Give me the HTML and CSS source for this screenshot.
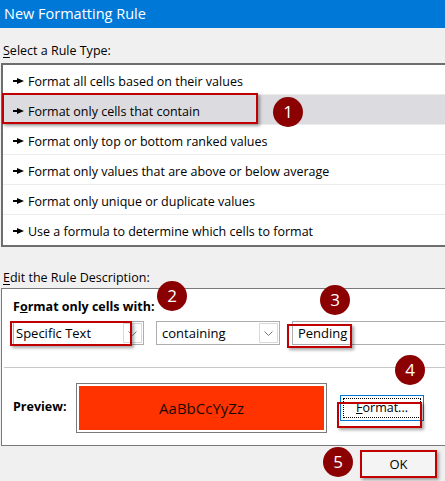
FILE: index.html
```html
<!DOCTYPE html>
<html>
<head>
<meta charset="utf-8">
<link rel="stylesheet" href="styles.css">
</head>
<body>
<div class="dialog">
  <div class="titlebar">New Formatting Rule</div>
  <div class="label sel"><u>S</u>elect a Rule Type:</div>
  <div class="list">
    <div class="row"><span class="arr"></span>Format all cells based on their values</div>
    <div class="row active"><span class="arr"></span>Format only cells that contain</div>
    <div class="row"><span class="arr"></span>Format only top or bottom ranked values</div>
    <div class="row"><span class="arr"></span>Format only values that are above or below average</div>
    <div class="row"><span class="arr"></span>Format only unique or duplicate values</div>
    <div class="row last"><span class="arr"></span>Use a formula to determine which cells to format</div>
  </div>
  <div class="label edit"><u>E</u>dit the Rule Description:</div>
  <div class="desc">
    <div class="top">
      <div class="bold">F<u>o</u>rmat only cells with:</div>
      <div class="controls">
        <div class="combo c1"><span class="val">Specific Text</span><span class="btn"><svg width="9" height="5" viewBox="0 0 9 5"><path d="M0.5 0.5 L4.5 4.5 L8.5 0.5" fill="none" stroke="#7a7a7a" stroke-width="1"/></svg></span></div>
        <div class="combo c2"><span class="val">containing</span><span class="btn"><svg width="9" height="5" viewBox="0 0 9 5"><path d="M0.5 0.5 L4.5 4.5 L8.5 0.5" fill="none" stroke="#7a7a7a" stroke-width="1"/></svg></span></div>
        <div class="textbox"><span class="val">Pending</span></div>
      </div>
    </div>
    <div class="bottom">
      <div class="bold prev">Preview:</div>
      <div class="preview"><div class="fill">AaBbCcYyZz</div></div>
      <div class="fmtbtn"><span><u>F</u>ormat...</span></div>
    </div>
  </div>
  <div class="footer">
    <div class="okbtn">OK</div>
  </div>

  <div class="hl hl1"></div>
  <div class="hl hl2"></div>
  <div class="hl hl3"></div>
  <div class="hl hl4"></div>
  <div class="hl hl5"></div>

  <div class="badge b1">1</div>
  <div class="badge b2">2</div>
  <div class="badge b3">3</div>
  <div class="badge b4">4</div>
  <div class="badge b5">5</div>
</div>
</body>
</html>
```
FILE: styles.css
```css
html, body {
  margin: 0;
  padding: 0;
}
body {
  width: 445px;
  height: 481px;
  overflow: hidden;
  background: #f0f0f0;
  font-family: "Open Sans", "Noto Sans", "DejaVu Sans", sans-serif;
  font-size: 12.5px;
  color: #000;
}
.dialog {
  position: relative;
  width: 445px;
  height: 481px;
  display: flex;
  flex-direction: column;
}
.titlebar {
  height: 28px;
  background: #0078d7;
  color: #fff;
  font-size: 14.5px;
  line-height: 28px;
  padding-left: 4px;
}
.label {
  padding-left: 3px;
  line-height: 16px;
}
.label u { text-decoration: underline; text-underline-offset: 2px; }
.sel { margin-top: 15px; height: 20px; }
.list {
  margin-left: 1px;
  width: 460px;
  border: 2px solid #6e6e6e;
  border-right: none;
  background: #fff;
  height: 180px;
}
.row {
  height: 29px;
  border-bottom: 1px solid #ececec;
  display: flex;
  align-items: center;
  padding-left: 10px;
  padding-top: 3px;
  box-sizing: content-box;
  height: 26px;
  white-space: nowrap;
}
.row.last { border-bottom: none; }
.row.active { background: #dcdbe0; }
.arr {
  display: inline-block;
  width: 11px;
  height: 6px;
  margin-right: 4px;
  margin-top: 0px;
  background:
    linear-gradient(#000, #000) 0 2px / 5px 2px no-repeat;
  position: relative;
}
.arr::after {
  content: "";
  position: absolute;
  left: 4px;
  top: 0;
  border-left: 7px solid #000;
  border-top: 3px solid transparent;
  border-bottom: 3px solid transparent;
}
.edit { margin-top: 23px; height: 18px; }
.desc {
  margin-left: 1px;
  width: 460px;
  border: 1px solid #7a7a7a;
  border-right: none;
  height: 156px;
  background: #fff;
  display: flex;
  flex-direction: column;
}
.top {
  height: 79px;
  border-bottom: 1px solid #c8c8c8;
  margin-left: 2px;
  padding-left: 9px;
  box-sizing: border-box;
}
.bold {
  font-weight: 700;
  font-size: 12.5px;
}
.top .bold { margin-top: 9px; line-height: 17px; }
.controls {
  display: flex;
  margin-top: 6px;
  gap: 12px;
}
.combo, .textbox {
  height: 24px;
  border: 1px solid #adadad;
  box-sizing: border-box;
  display: flex;
  align-items: center;
  background: #fff;
}
.c1 { width: 131px; }
.c2 { width: 124px; }
.textbox { width: 170px; border-right: none; }
.val { flex: 1; padding-left: 2px; font-size: 13px; }
.c2 .val, .textbox .val { padding-left: 5px; }
.btn {
  width: 19px;
  height: 20px;
  margin-right: 1px;
  border: 1px solid #d9d9d9;
  box-sizing: border-box;
  display: flex;
  align-items: center;
  justify-content: center;
}
.bottom {
  flex: 1;
  display: flex;
  align-items: center;
  padding-left: 11px;
}
.prev { width: 63px; }
.preview {
  width: 251px;
  height: 50px;
  border: 1px solid #7a7a7a;
  box-sizing: border-box;
  padding: 2px;
  background: #fff;
  margin-top: 2px;
}
.fill {
  height: 100%;
  background: #ff3300;
  display: flex;
  align-items: center;
  justify-content: center;
  font-size: 15px;
  color: #1a0a00;
}
.fmtbtn {
  margin-left: 13px;
  width: 84px;
  height: 26px;
  border: 1px solid #0078d7;
  box-sizing: border-box;
  background: #fff;
  display: flex;
  align-items: center;
  justify-content: center;
  padding: 2px;
  margin-top: 2px;
}
.fmtbtn span {
  width: 100%;
  height: 100%;
  border: 1px dotted #000;
  box-sizing: border-box;
  display: flex;
  align-items: center;
  justify-content: center;
}
.footer {
  flex: 1;
  display: flex;
  justify-content: flex-end;
  padding-right: 8px;
  padding-top: 4px;
}
.okbtn {
  width: 77px;
  height: 27px;
  border: 1px solid #adadad;
  box-sizing: border-box;
  background: #f4f4f4;
  display: flex;
  align-items: center;
  justify-content: center;
  font-size: 13px;
}
.hl {
  position: absolute;
  border: 2px solid #c00000;
  box-sizing: border-box;
  box-shadow: 2px 2px 3px rgba(0,0,0,0.35);
}
.hl1 { left: 2px; top: 93px; width: 256px; height: 31px; }
.hl2 { left: 10px; top: 321px; width: 122px; height: 25px; }
.hl3 { left: 287px; top: 324px; width: 65px; height: 24px; }
.hl4 { left: 337px; top: 402px; width: 85px; height: 26px; }
.hl5 { left: 360px; top: 450px; width: 77px; height: 28px; }
.badge {
  position: absolute;
  width: 30px;
  height: 30px;
  border-radius: 50%;
  background: #8b0000;
  color: #fff;
  font-family: "Open Sans", "Noto Sans", sans-serif;
  font-size: 17px;
  line-height: 30px;
  text-align: center;
}
.b1 { left: 273px; top: 97px; }
.b2 { left: 157px; top: 281px; }
.b3 { left: 320px; top: 285px; }
.b4 { left: 395px; top: 355px; }
.b5 { left: 323px; top: 447px; }
```
